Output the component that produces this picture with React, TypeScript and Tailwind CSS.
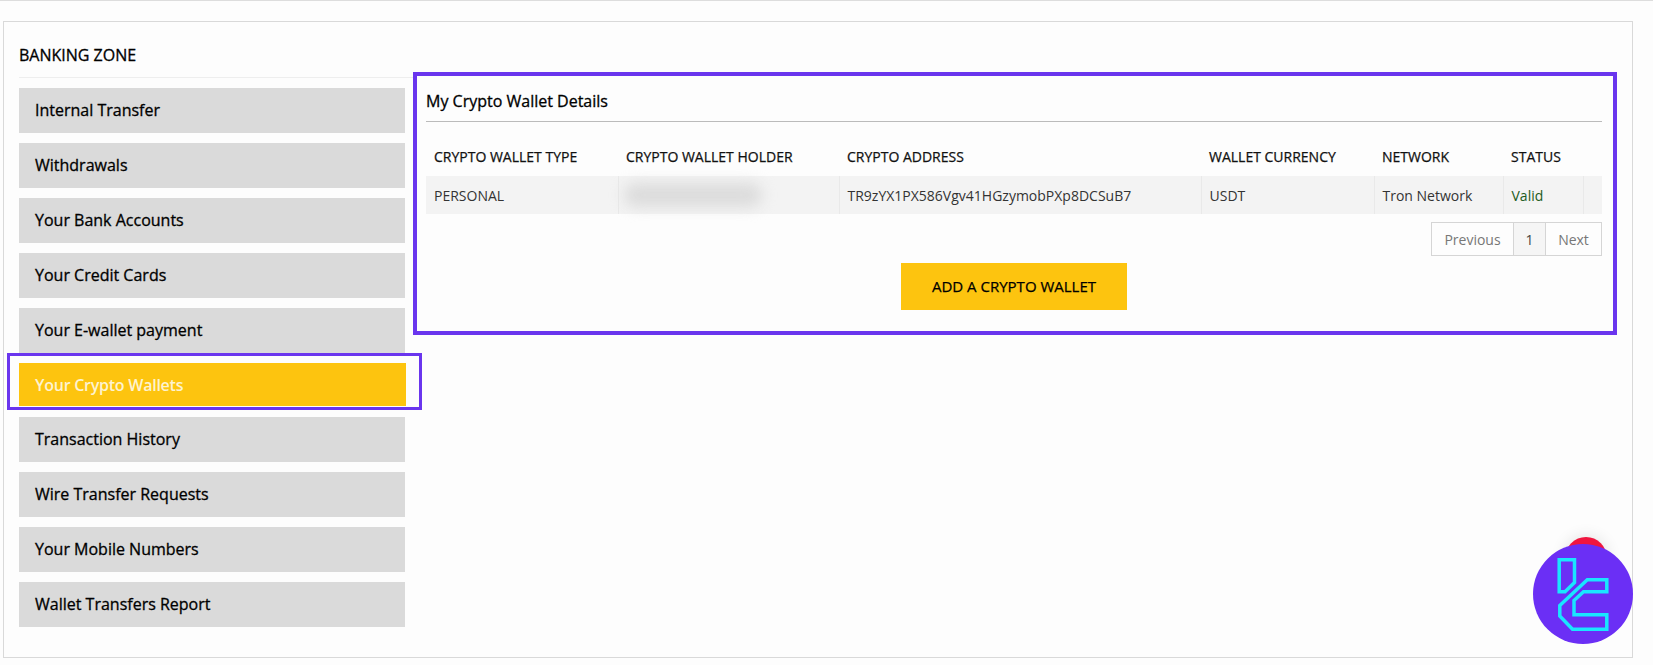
import React from 'react';

const menuItems = [
  'Internal Transfer',
  'Withdrawals',
  'Your Bank Accounts',
  'Your Credit Cards',
  'Your E-wallet payment',
  'Your Crypto Wallets',
  'Transaction History',
  'Wire Transfer Requests',
  'Your Mobile Numbers',
  'Wallet Transfers Report',
];

const columns = [
  { label: 'CRYPTO WALLET TYPE', width: 'w-[192px]' },
  { label: 'CRYPTO WALLET HOLDER', width: 'w-[221px]' },
  { label: 'CRYPTO ADDRESS', width: 'w-[362px]' },
  { label: 'WALLET CURRENCY', width: 'w-[173px]' },
  { label: 'NETWORK', width: 'w-[129px]' },
  { label: 'STATUS', width: 'w-[80px]' },
  { label: '', width: 'w-[19px]' },
];

const SideMenu = () => (
  <div className="w-[394px] shrink-0">
    <div className="h-[56px] border-b border-[#eeeeee] pt-[21px] text-[16px] leading-[24px] font-medium text-black [-webkit-text-stroke:0.3px_black]">
      BANKING ZONE
    </div>
    <div className="mt-[10px] flex w-[386px] flex-col gap-[9.9px]">
      {menuItems.map((item) => {
        const active = item === 'Your Crypto Wallets';
        return (
          <div
            key={item}
            className={
              active
                ? 'relative my-px flex h-[43px] w-[387px] items-center bg-[#fdc40f] px-4 text-[16px] font-semibold tracking-[-0.25px] text-[#fdf3d0]'
                : 'flex h-[45px] items-center bg-[#dadada] px-4 pb-[1px] text-[16px] font-medium text-black [-webkit-text-stroke:0.3px_black]'
            }
          >
            {item}
            {active && (
              <div className="absolute top-[-10px] left-[-12px] h-[57px] w-[415px] border-[3.5px] border-[#6a35ee]" />
            )}
          </div>
        );
      })}
    </div>
  </div>
);

const WalletDetails = () => (
  <div className="mt-[50px] h-[263px] w-[1204px] border-4 border-[#6a35ee] pr-[11px] pl-[9px]">
    <div className="h-[46px] border-b border-[#bbbbbb] pt-[13px] text-[16px] leading-[24px] font-medium text-black [-webkit-text-stroke:0.3px_black]">
      My Crypto Wallet Details
    </div>
    <table className="mt-[8px] w-[1176px] table-fixed border-collapse text-[14px]">
      <thead>
        <tr className="h-[46px] text-left text-[#111111]">
          {columns.map((col) => (
            <th key={col.label} className={`${col.width} pt-[6px] pl-2 font-medium [-webkit-text-stroke:0.25px_#111111]`}>
              {col.label}
            </th>
          ))}
        </tr>
      </thead>
      <tbody>
        <tr className="h-[38px] bg-[#f3f3f3] text-[#333333]">
          <td className="border-r border-[#e9e9e9] pl-2">PERSONAL</td>
          <td className="border-r border-[#e9e9e9] pl-2">
            <div className="ml-[-3px] h-[24px] w-[138px] rounded-full bg-[#dcdcdc] blur-[7px]" />
          </td>
          <td className="border-r border-[#e9e9e9] pl-2">TR9zYX1PX586Vgv41HGzymobPXp8DCSuB7</td>
          <td className="border-r border-[#e9e9e9] pl-2">USDT</td>
          <td className="border-r border-[#e9e9e9] pl-2">Tron Network</td>
          <td className="border-r border-[#e9e9e9] pl-2 text-[#1d5c22]">Valid</td>
          <td />
        </tr>
      </tbody>
    </table>
    <div className="mt-[8px] flex justify-end">
      <div className="flex h-[34px] items-stretch border border-[#d5d5d5] text-[14px] text-[#777777]">
        <div className="flex w-[81px] items-center justify-center">Previous</div>
        <div className="flex w-[33px] items-center justify-center border-x border-[#d5d5d5] bg-[#f5f5f5] text-[#444444]">1</div>
        <div className="flex w-[55px] items-center justify-center">Next</div>
      </div>
    </div>
    <div className="mt-[7px] flex justify-center">
      <div className="flex h-[47px] w-[226px] items-center justify-center bg-[#fdc40f] text-[15px] font-medium text-black [-webkit-text-stroke:0.25px_black]">
        ADD A CRYPTO WALLET
      </div>
    </div>
  </div>
);

const LogoBadge = () => (
  <div className="absolute top-[537px] left-[1533px] h-[107px] w-[100px]">
    <div className="absolute top-0 left-[32px] h-[46px] w-[42px] rounded-full bg-[#f0153f] shadow-[0_0_16px_rgba(0,0,0,0.12)]" />
    <div className="absolute top-[7px] left-0 h-[100px] w-[100px] rounded-full bg-[#6b2ff5]" />
    <svg className="absolute top-[7px] left-0" width="100" height="100" viewBox="0 0 100 100" fill="none" stroke="#19e6ff" strokeWidth="3.5">
      <path d="M26.2 15.8H41.5V38.5L32 47.8H26.2Z" />
      <path d="M54.3 35.8H73.8V47.8H50.5L41 56.5V70.8H73.8V85.2H39.5L26.8 72V61.5Z" />
    </svg>
  </div>
);

export default function App() {
  return (
    <div
      className="relative h-[665px] w-[1653px] overflow-hidden bg-[#fdfdfd] text-black"
      style={{ fontFamily: '"Open Sans", sans-serif' }}
    >
      <div className="h-px bg-[#dddddd]" />
      <div className="mt-[20px] ml-[3px] flex h-[637px] w-[1630px] border border-[#d9d9d9] pl-[15px]">
        <SideMenu />
        <WalletDetails />
      </div>
      <LogoBadge />
    </div>
  );
}
